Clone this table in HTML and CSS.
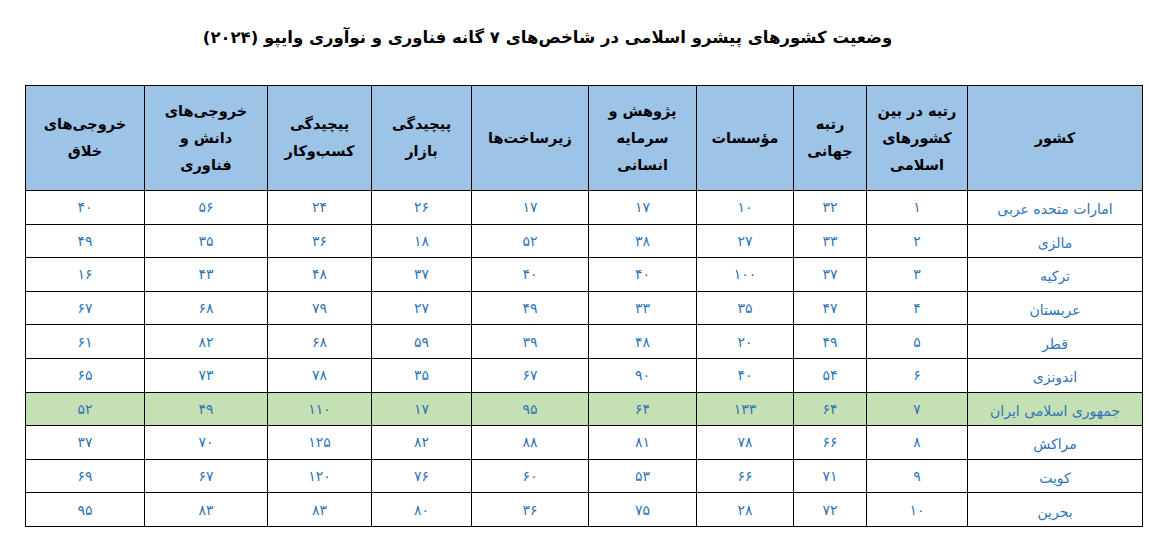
FILE: index.html
```html
<!DOCTYPE html>
<html lang="fa" dir="rtl">
<head>
<meta charset="utf-8">
<title>وضعیت کشورهای پیشرو اسلامی</title>
<link rel="stylesheet" href="styles.css">
</head>
<body>
<div class="page">
  <h1 class="title">وضعیت کشورهای پیشرو اسلامی در شاخص‌های ۷ گانه فناوری و نوآوری وایپو (۲۰۲۴)</h1>
  <table class="gii">
    <colgroup>
      <col class="c-country"><col class="c-rank-i"><col class="c-rank-w"><col class="c-inst"><col class="c-hum"><col class="c-infra"><col class="c-mkt"><col class="c-bus"><col class="c-know"><col class="c-crea">
    </colgroup>
    <thead>
      <tr>
        <th>کشور</th>
        <th>رتبه در بین<br>کشورهای<br>اسلامی</th>
        <th>رتبه<br>جهانی</th>
        <th>مؤسسات</th>
        <th>پژوهش و<br>سرمایه<br>انسانی</th>
        <th>زیرساخت‌ها</th>
        <th>پیچیدگی<br>بازار</th>
        <th>پیچیدگی<br>کسب‌وکار</th>
        <th>خروجی‌های<br>دانش و<br>فناوری</th>
        <th>خروجی‌های<br>خلاق</th>
      </tr>
    </thead>
    <tbody>
      <tr><td class="country">امارات متحده عربی</td><td>۱</td><td>۳۲</td><td>۱۰</td><td>۱۷</td><td>۱۷</td><td>۲۶</td><td>۲۴</td><td>۵۶</td><td>۴۰</td></tr>
      <tr><td class="country">مالزی</td><td>۲</td><td>۳۳</td><td>۲۷</td><td>۳۸</td><td>۵۲</td><td>۱۸</td><td>۳۶</td><td>۳۵</td><td>۴۹</td></tr>
      <tr><td class="country">ترکیه</td><td>۳</td><td>۳۷</td><td>۱۰۰</td><td>۴۰</td><td>۴۰</td><td>۳۷</td><td>۴۸</td><td>۴۳</td><td>۱۶</td></tr>
      <tr><td class="country">عربستان</td><td>۴</td><td>۴۷</td><td>۳۵</td><td>۳۳</td><td>۴۹</td><td>۲۷</td><td>۷۹</td><td>۶۸</td><td>۶۷</td></tr>
      <tr><td class="country">قطر</td><td>۵</td><td>۴۹</td><td>۲۰</td><td>۴۸</td><td>۳۹</td><td>۵۹</td><td>۶۸</td><td>۸۲</td><td>۶۱</td></tr>
      <tr><td class="country">اندونزی</td><td>۶</td><td>۵۴</td><td>۴۰</td><td>۹۰</td><td>۶۷</td><td>۳۵</td><td>۷۸</td><td>۷۳</td><td>۶۵</td></tr>
      <tr class="hl"><td class="country">جمهوری اسلامی ایران</td><td>۷</td><td>۶۴</td><td>۱۳۳</td><td>۶۴</td><td>۹۵</td><td>۱۷</td><td>۱۱۰</td><td>۴۹</td><td>۵۲</td></tr>
      <tr><td class="country">مراکش</td><td>۸</td><td>۶۶</td><td>۷۸</td><td>۸۱</td><td>۸۸</td><td>۸۲</td><td>۱۲۵</td><td>۷۰</td><td>۳۷</td></tr>
      <tr><td class="country">کویت</td><td>۹</td><td>۷۱</td><td>۶۶</td><td>۵۳</td><td>۶۰</td><td>۷۶</td><td>۱۲۰</td><td>۶۷</td><td>۶۹</td></tr>
      <tr><td class="country">بحرین</td><td>۱۰</td><td>۷۲</td><td>۲۸</td><td>۷۵</td><td>۳۶</td><td>۸۰</td><td>۸۳</td><td>۸۳</td><td>۹۵</td></tr>
    </tbody>
  </table>
</div>
</body>
</html>
```

FILE: styles.css
```css
html, body {
  margin: 0;
  padding: 0;
  background: #ffffff;
}
body {
  font-family: "DejaVu Sans", sans-serif;
  color: #000;
}
.page {
  width: 1149px;
  padding-top: 26px;
  box-sizing: border-box;
}
.title {
  margin: 0;
  height: 59px;
  font-size: 16.5px;
  font-weight: bold;
  line-height: 24px;
  text-align: center;
  padding-right: 54px;
}
.gii {
  border-collapse: collapse;
  table-layout: fixed;
  width: 1117px;
  margin-right: 6px;
  margin-left: 26px;
}
.c-country { width: 175px; }
.c-rank-i { width: 101px; }
.c-rank-w { width: 73px; }
.c-inst { width: 97px; }
.c-hum { width: 108px; }
.c-infra { width: 117px; }
.c-mkt { width: 100px; }
.c-bus { width: 104px; }
.c-know { width: 123px; }
.c-crea { width: 119px; }
.gii th, .gii td {
  border: 1.5px solid #000;
  text-align: center;
  padding: 0;
}
.gii thead tr {
  height: 105px;
}
.gii th {
  background: #9dc3e6;
  font-size: 14.5px;
  font-weight: bold;
  line-height: 27px;
  vertical-align: middle;
}
.gii tbody tr {
  height: 33.6px;
}
.gii td {
  font-size: 14px;
  color: #2e75b6;
  line-height: 18px;
  vertical-align: middle;
}
.gii td.country {
  font-size: 14px;
  padding-top: 4px;
}
.gii tr.hl td {
  background: #c5e0b4;
}
```
